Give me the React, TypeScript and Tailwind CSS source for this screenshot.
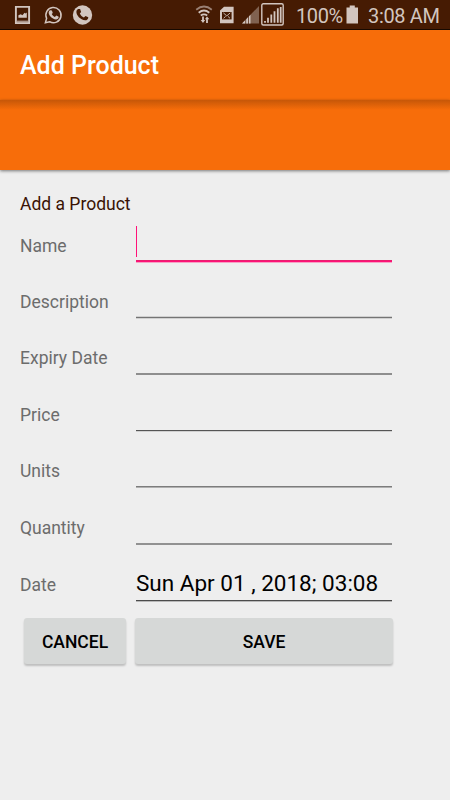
import { useState } from 'react'

interface Field {
  label: string
  value: string
  row: string
  line: string
}

const initialFields: Field[] = [
  { label: 'Name', value: '', row: 'h-[56px]', line: 'h-[3px] border-y-[1px] border-t-[#e91e6f] border-b-[#f5a3c4] bg-[#ff1178]' },
  { label: 'Description', value: '', row: 'h-[56px]', line: 'h-[3px] border-y border-[#d0d0d0] bg-[#747474]' },
  { label: 'Expiry Date', value: '', row: 'h-[57px]', line: 'h-[2px] bg-[#8e8e8e]' },
  { label: 'Price', value: '', row: 'h-[56px]', line: 'h-[2px] border-b border-[#d0d0d0] bg-[#555555]' },
  { label: 'Units', value: '', row: 'h-[57px]', line: 'h-[2px] border-b border-[#b0b0b0] bg-[#7c7c7c]' },
  { label: 'Quantity', value: '', row: 'h-[57px]', line: 'h-[2px] bg-[#919191]' },
  { label: 'Date', value: 'Sun Apr 01 , 2018; 03:08', row: 'h-[57px]', line: 'h-[2px] border-b border-[#b8b8b8] bg-[#4c4c4c]' },
]

function StatusBar() {
  return (
    <header className="flex h-[30px] border-b border-[#170900] bg-[#461b03] text-[#d2c5bf]">
      <svg className="h-[29px] w-[290px]" viewBox="0 0 290 29" fill="none">
        <path d="M15.9 6.9h13.2v16.2H15.9z" stroke="currentColor" strokeWidth="1.9" />
        <path d="M17 20.6h11v2H17z" fill="currentColor" opacity=".7" />
        <path d="M18.4 17.8v-2.6l2.4-1 1.6 1 2.2-2.4 1 .8 1.2-1v5.2z" fill="currentColor" />

        <path d="M45.4 22.8l1.2-4.4A7.6 7.6 0 1 1 49.6 21.7z" stroke="currentColor" strokeWidth="1.5" />
        <path d="M50.2 10.2l1.7.2.9 2.5-1.1 1.2c.8 1.5 1.8 2.4 3.2 2.9l1.4-1.4 2.4 1.2c.1 1.7-1.3 2.6-2.7 2.6-4.2-.4-7.5-4.5-7.3-7 .1-1 .7-1.8 1.5-2.2z" fill="currentColor" />

        <circle cx="82.5" cy="15" r="9.7" fill="currentColor" />
        <path d="M78.2 9l1.9.1 1 2.8-1.3 1.5c1 1.9 2.2 3.1 4.1 4l1.6-1.4 2.8 1.2c.1 2-1.6 3.1-3.1 3.1-4.9-.4-9-5.3-8.8-8.6.1-1.2.8-2.2 1.8-2.7z" fill="#461b03" />

        <path d="M196.2 9.7q7.8-6.4 15.6 0" stroke="currentColor" strokeWidth="1.8" opacity=".6" />
        <path d="M198.7 12.7q5.3-4.4 10.6 0M200.8 15.5q3.2-2.4 6.4 0" stroke="currentColor" strokeWidth="1.8" />
        <path d="M203 16.5v4.5M207 18v5" stroke="currentColor" strokeWidth="1.8" />
        <path d="M200.7 20l2.3 3 2.2-3zM204.9 19.3l2.1-2.8 2.3 2.8z" fill="currentColor" />

        <path d="M220 10.4l4-3.7h9.6v16.6H220z" fill="currentColor" />
        <path d="M222 12h9.6v7.4H222z" fill="#461b03" />
        <path d="M223.4 12.9l3.4 3 3.4-3M223.6 18.3l2-1.9M230 18.3l-2-1.9" stroke="currentColor" strokeWidth=".9" />

        <path d="M242 23.5L259 6v17.5z" fill="currentColor" opacity=".42" />
        <path d="M242 23.5l8.5-8.8v8.8z" fill="currentColor" />
        <path d="M245.7 17v7M248.5 14v10" stroke="#461b03" strokeWidth=".7" />
        <rect x="261.8" y="3.8" width="21.4" height="21.2" rx="1.5" stroke="currentColor" strokeWidth="1.4" />
        <path d="M265 22.8v-1.7M268 22.8v-5M271.3 22.8v-8.3M274.5 22.8V11.3M277.8 22.8V8.3M280.7 22.8V7" stroke="currentColor" strokeWidth="1.8" />
      </svg>
      <div className="flex h-[32px] items-center pl-[6px]">
        <span className="w-[50px] text-[20px] tracking-[-0.4px]">100%</span>
        <svg className="mb-[3px] h-[20px] w-[13px]" viewBox="0 0 13 20" fill="currentColor">
          <path d="M3.7.5h5.1v2H12v16H.5v-16h3.2z" />
        </svg>
        <span className="ml-[9px] text-[20px] tracking-[-0.35px] whitespace-nowrap">3:08 AM</span>
      </div>
    </header>
  )
}

export default function App() {
  const [fields, setFields] = useState(initialFields)

  const updateField = (label: string, value: string) => {
    setFields(fields.map((field) => (field.label === label ? { ...field, value } : field)))
  }

  const clearFields = () => setFields(initialFields)

  return (
    <div className="h-[800px] w-[450px] overflow-hidden bg-[#eeeeee] font-['Roboto',sans-serif]">
      <StatusBar />
      <div className="flex h-[70px] items-center bg-[#f76d0a] pt-[2px] pl-5">
        <h1 className="text-[25px] leading-[30px] font-medium text-white">Add Product</h1>
      </div>
      <div className="h-[70px] bg-[#f76d0a] shadow-[0_1px_3px_rgba(0,0,0,0.5)]">
        <div className="h-[10px] bg-linear-to-b from-[#c65708] to-[#f76d0a]"></div>
      </div>

      <main className="pt-[23px] pl-5">
        <h2 className="h-[24px] text-[17.5px] leading-[22px] text-[#3a1303]">Add a Product</h2>
        <form onSubmit={(e) => e.preventDefault()}>
          {fields.map((field, index) => (
            <label key={field.label} className={`flex ${field.row}`}>
              <span className="w-[116px] pt-[18px] text-[17.5px] leading-[22px] text-[#6c6c6c]">{field.label}</span>
              <span className="flex h-[46px] w-[256px] flex-col justify-end">
                <span className="flex h-[38px] items-center">
                  {index === 0 && <span className="h-[31px] w-px bg-[#ff1178]"></span>}
                  <input
                    className="h-[34px] min-w-0 flex-1 pt-[4px] text-[22.5px] leading-[30px] text-black caret-[#ff1178] outline-none"
                    value={field.value}
                    onChange={(e) => updateField(field.label, e.target.value)}
                  />
                </span>
                <span className={field.line}></span>
              </span>
            </label>
          ))}
          <div className="flex gap-[9px] pt-[5px] pl-[4px]">
            <button
              type="button"
              onClick={clearFields}
              className="h-[46px] w-[102px] rounded-[3px] bg-[#d6d8d7] pt-[2px] text-[17.5px] font-medium text-black shadow-[0_2px_2px_rgba(0,0,0,0.2)]"
            >
              CANCEL
            </button>
            <button
              type="submit"
              className="h-[46px] w-[258px] rounded-[3px] bg-[#d6d8d7] pt-[2px] text-[17.5px] font-medium text-black shadow-[0_2px_2px_rgba(0,0,0,0.2)]"
            >
              SAVE
            </button>
          </div>
        </form>
      </main>
    </div>
  )
}
